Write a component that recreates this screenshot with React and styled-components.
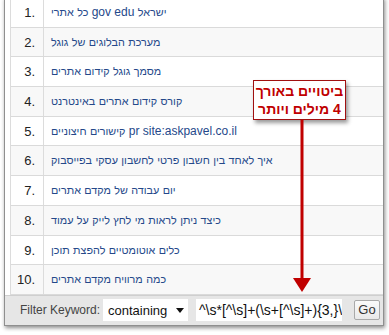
import React from "react";
import styled, { createGlobalStyle } from "styled-components";

const GlobalStyle = createGlobalStyle`
  html, body {
    margin: 0;
    padding: 0;
    background: #ffffff;
    overflow: hidden;
  }
  body {
    font-family: "Liberation Sans", Arial, "DejaVu Sans", sans-serif;
  }
`;

const queries = [
  "כל אתרי gov edu ישראל",
  "מערכת הבלוגים של גוגל",
  "מסמך גוגל קידום אתרים",
  "קורס קידום אתרים באינטרנט",
  "קישורים חיצוניים pr site:askpavel.co.il",
  "איך לאחד בין חשבון פרטי לחשבון עסקי בפייסבוק",
  "יום עבודה של מקדם אתרים",
  "כיצד ניתן לראות מי לחץ לייק על עמוד",
  "כלים אוטומטיים להפצת תוכן",
  "כמה מרוויח מקדם אתרים",
];

// Hebrew glyphs in the fallback font run wider than the original's, so they get a smaller size
function renderQuery(q) {
  return q.split(/([\u0590-\u05FF]+)/).map((part, i) =>
    /[\u0590-\u05FF]/.test(part) ? <Heb key={i}>{part}</Heb> : part
  );
}

export default function App() {
  return (
    <>
      <GlobalStyle />
      <Stage>
        <Panel>
          <Table>
            {queries.map((q, i) => (
              <Row key={i} $odd={i % 2 === 1}>
                <Num>{i + 1}.</Num>
                <Query>{renderQuery(q)}</Query>
              </Row>
            ))}
          </Table>
          <FilterBar>
            <Label>Filter Keyword:</Label>
            <Select>
              <span>containing</span>
              <Caret />
            </Select>
            <Input>^\s*[^\s]+(\s+[^\s]+){"{3,}"}\s</Input>
            <GoButton>Go</GoButton>
          </FilterBar>
        </Panel>

        <Callout>
          <div>ביטויים באורך</div>
          <div>4 מילים ויותר</div>
        </Callout>
        <Arrow>
          <svg width="20" height="174" viewBox="0 0 20 174">
            <rect x="8.5" y="0" width="3" height="160" fill="#c00000" />
            <polygon points="1,158 19,158 10,172" fill="#c00000" />
          </svg>
        </Arrow>
      </Stage>
    </>
  );
}

const Stage = styled.div`
  position: relative;
  width: 389px;
  height: 335px;
  padding: 0 5px 0 4px;
  box-sizing: border-box;
`;

const Panel = styled.div`
  margin-top: -3px;
  background: #ffffff;
  border: 1px solid #8f8f8f;
  box-shadow: 1px 2px 4px rgba(0, 0, 0, 0.45);
`;

const Table = styled.div`
  margin-left: 5px;
  border-left: 1px solid #dcdcdc;
`;

const Row = styled.div`
  display: flex;
  height: 29.7px;
  box-sizing: border-box;
  border-bottom: 1px solid #dadada;
  background: ${(p) => (p.$odd ? "#f8f8f8" : "#ffffff")};
  line-height: 29px;
`;

const Num = styled.div`
  width: 33px;
  flex: none;
  box-sizing: border-box;
  padding-right: 8px;
  text-align: right;
  font-size: 13px;
  color: #222;
  border-right: 1px solid #dcdcdc;
`;

const Query = styled.div`
  flex: 1;
  padding-left: 7px;
  font-size: 12px;
  color: #24488a;
  white-space: nowrap;
  overflow: hidden;
`;

const Heb = styled.span`
  font-size: 10.8px;
`;

const FilterBar = styled.div`
  display: flex;
  align-items: center;
  height: 29px;
  padding: 0 3px 0 15px;
  background: #e6e6e6;
  border-top: 1px solid #cfcfcf;
`;

const Label = styled.div`
  flex: none;
  width: 83px;
  font-size: 12px;
  color: #444;
  white-space: nowrap;
`;

const Select = styled.div`
  flex: none;
  display: flex;
  align-items: center;
  justify-content: space-between;
  width: 85px;
  height: 22px;
  box-sizing: border-box;
  padding: 0 4px 0 5px;
  background: #ffffff;
  font-size: 13px;
  color: #111;
  margin-right: 8px;
`;

const Caret = styled.span`
  width: 0;
  height: 0;
  border-left: 4px solid transparent;
  border-right: 4px solid transparent;
  border-top: 5px solid #111;
`;

const Input = styled.div`
  flex: none;
  width: 146px;
  height: 22px;
  box-sizing: border-box;
  padding: 0 0 0 3px;
  background: #ffffff;
  font-size: 14px;
  line-height: 22px;
  color: #111;
  white-space: nowrap;
  overflow: hidden;
  margin-right: 12px;
`;

const GoButton = styled.div`
  flex: none;
  width: 26px;
  height: 20px;
  box-sizing: border-box;
  border: 1px solid #a9a9a9;
  border-radius: 2px;
  background: linear-gradient(#fafafa, #e9e9e9);
  font-size: 13px;
  line-height: 18px;
  text-align: center;
  color: #333;
`;

const Callout = styled.div`
  position: absolute;
  left: 253px;
  top: 83px;
  width: 93px;
  height: 40px;
  box-sizing: border-box;
  border: 1px solid #a01010;
  background: #ffffff;
  box-shadow: 2px 3px 4px rgba(0, 0, 0, 0.4);
  direction: rtl;
  text-align: center;
  white-space: nowrap;
  font-size: 14px;
  font-weight: bold;
  line-height: 18px;
  padding-top: 1px;
  color: #c00000;
`;

const Arrow = styled.div`
  position: absolute;
  left: 292px;
  top: 123px;
  line-height: 0;
`;
